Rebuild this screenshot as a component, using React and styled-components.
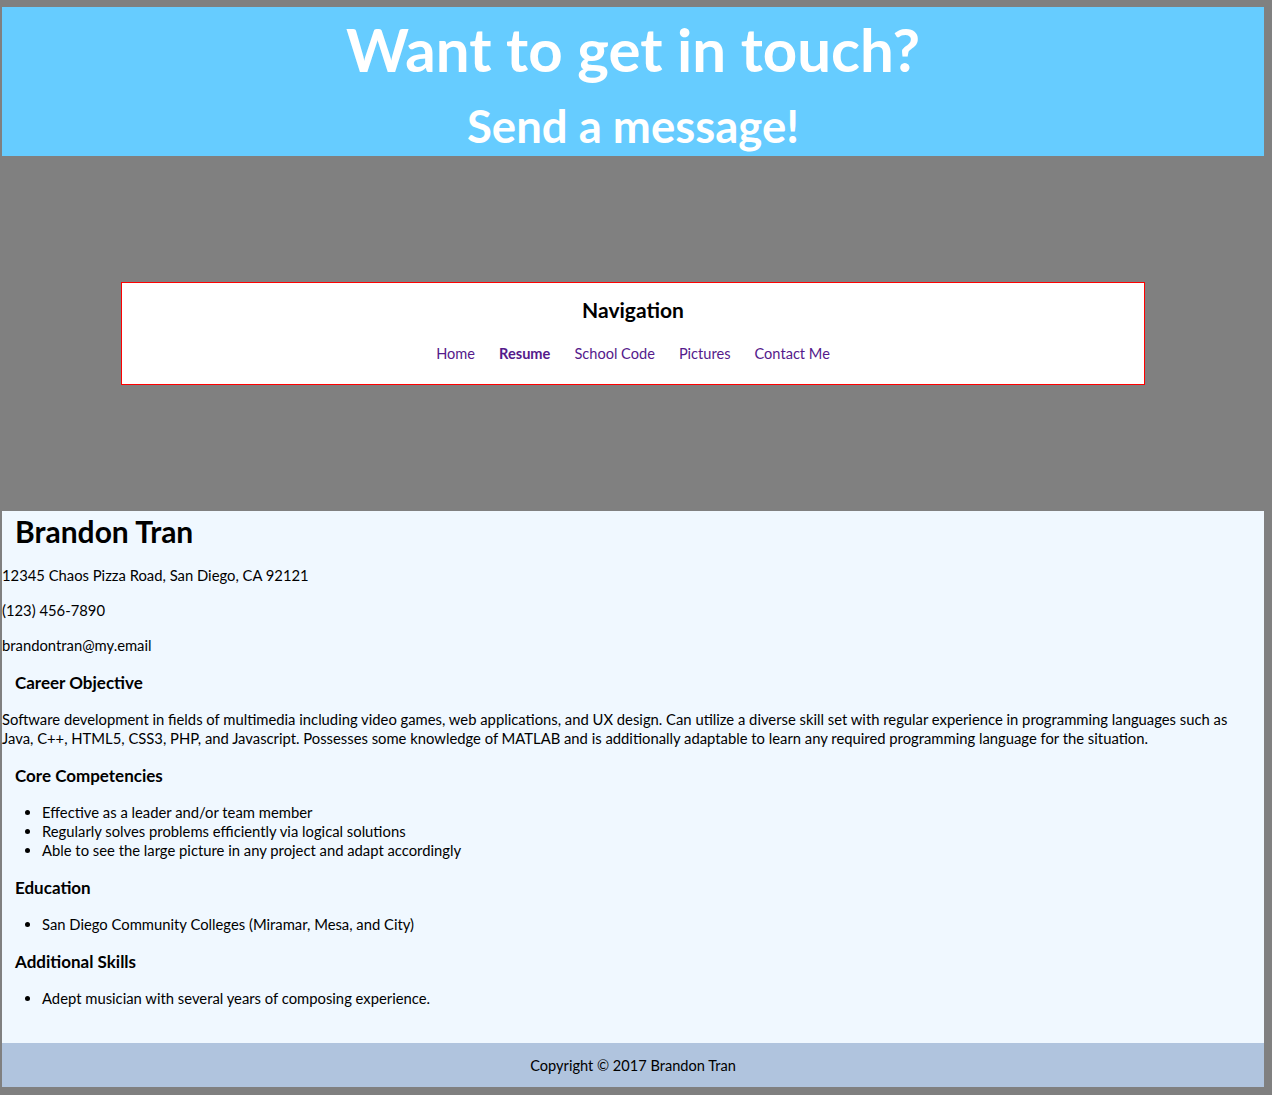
import React from "react";
import styled, { createGlobalStyle } from "styled-components";

const Global = createGlobalStyle`
  html, body { margin: 0; padding: 0; }
  body {
    background: #808080;
    padding: 7px 8px 8px 2px;
    font-family: Lato, "Open Sans", sans-serif;
    color: #000;
  }
`;

const Header = styled.header`
  background: #66ccff;
  color: #fff;
  text-align: center;
  height: 149px;
  display: flex;
  flex-direction: column;
  align-items: center;
`;

const Title = styled.h1`
  margin: 3px 0 0;
  font-size: 60px;
  line-height: 78px;
  font-weight: 700;
`;

const Subtitle = styled.h2`
  margin: 11px 0 0;
  font-size: 45.5px;
  line-height: 54px;
  font-weight: 700;
`;

const Gap = styled.div`
  height: 126px;
`;

const NavBox = styled.nav`
  box-sizing: border-box;
  width: 1024px;
  height: 103px;
  margin: 0 auto;
  background: #fff;
  border: 1px solid #ff0000;
  display: flex;
  flex-direction: column;
  align-items: center;
`;

const NavTitle = styled.h3`
  margin: 14px 0 0;
  font-size: 21px;
  line-height: 26px;
  font-weight: 700;
`;

const NavLinks = styled.div`
  display: flex;
  gap: 24px;
  margin-top: 22px;
`;

const NavLink = styled.a`
  color: #551a8b;
  text-decoration: none;
  font-size: 14.6px;
  line-height: 18px;
  font-weight: ${(p) => (p.$active ? 700 : 400)};
`;

const Main = styled.main`
  background: #f0f8ff;
  padding: 3px 0 19px;
  font-size: 14.8px;
`;

const Name = styled.h1`
  margin: 0 0 18px;
  padding-left: 13px;
  font-size: 30px;
  line-height: 34px;
  font-weight: 700;
`;

const Para = styled.p`
  margin: 16px 0;
  padding-right: 12px;
  line-height: 19px;
`;

const Section = styled.h3`
  margin: 17px 0 16px;
  padding-left: 13px;
  font-size: 17px;
  line-height: 22px;
  font-weight: 700;
`;

const List = styled.ul`
  margin: 16px 0;
  padding-left: 40px;
  line-height: 19px;
`;

const Footer = styled.footer`
  background: #b0c4de;
  height: 44px;
  display: flex;
  align-items: center;
  justify-content: center;
  font-size: 14.6px;
`;

export default function App() {
  return (
    <>
      <Global />
      <Header>
        <Title>Want to get in touch?</Title>
        <Subtitle>Send a message!</Subtitle>
      </Header>
      <Gap />
      <NavBox>
        <NavTitle>Navigation</NavTitle>
        <NavLinks>
          <NavLink href="#">Home</NavLink>
          <NavLink href="#" $active>Resume</NavLink>
          <NavLink href="#">School Code</NavLink>
          <NavLink href="#">Pictures</NavLink>
          <NavLink href="#">Contact Me</NavLink>
        </NavLinks>
      </NavBox>
      <Gap />
      <Main>
        <Name>Brandon Tran</Name>
        <Para>12345 Chaos Pizza Road, San Diego, CA 92121</Para>
        <Para>(123) 456-7890</Para>
        <Para>brandontran@my.email</Para>
        <Section>Career Objective</Section>
        <Para>
          Software development in fields of multimedia including video games, web applications, and UX design. Can utilize a diverse skill set with regular experience in programming languages such as Java, C++, HTML5, CSS3, PHP, and Javascript. Possesses some knowledge of MATLAB and is additionally adaptable to learn any required programming language for the situation.
        </Para>
        <Section>Core Competencies</Section>
        <List>
          <li>Effective as a leader and/or team member</li>
          <li>Regularly solves problems efficiently via logical solutions</li>
          <li>Able to see the large picture in any project and adapt accordingly</li>
        </List>
        <Section>Education</Section>
        <List>
          <li>San Diego Community Colleges (Miramar, Mesa, and City)</li>
        </List>
        <Section>Additional Skills</Section>
        <List>
          <li>Adept musician with several years of composing experience.</li>
        </List>
      </Main>
      <Footer>Copyright © 2017 Brandon Tran</Footer>
    </>
  );
}
